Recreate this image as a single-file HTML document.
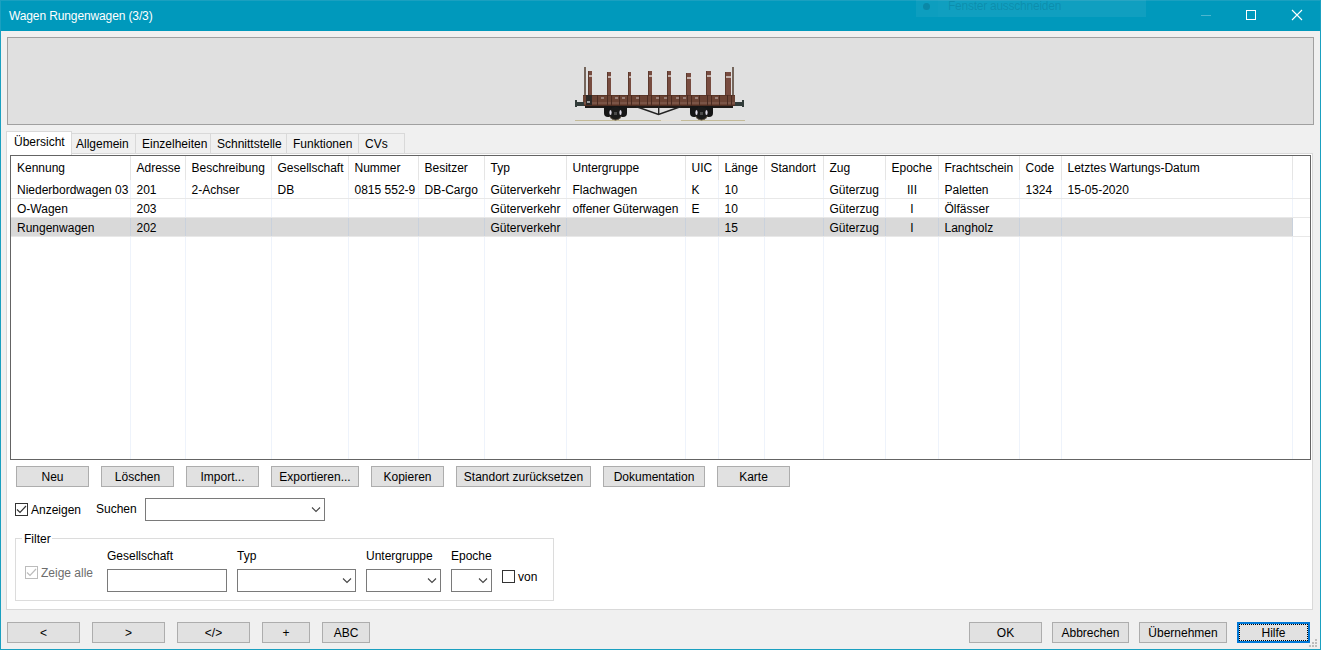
<!DOCTYPE html>
<html><head><meta charset="utf-8"><title>Wagen</title><style>
*{box-sizing:border-box;margin:0;padding:0}
html,body{width:1321px;height:650px;overflow:hidden;background:#f0f0f0}
body{position:relative;font-family:"Liberation Sans",sans-serif;font-size:12px;color:#000}
.a{position:absolute;white-space:pre}
.t{position:absolute;white-space:pre;line-height:14px}
.btn{position:absolute;border:1px solid #adadad;background:#e1e1e1}
.tab{position:absolute;top:133px;height:21px;border:1px solid #d9d9d9;border-bottom:none;background:#f0f0f0}
.cb{position:absolute;width:13px;height:13px;border:1px solid #333;background:#fff}
.inp{position:absolute;border:1px solid #7a7a7a;background:#fff}
</style></head><body>
<div class="a" style="left:0px;top:0px;width:1321px;height:31px;background:#0099bc"></div>
<div class="a" style="left:0px;top:0px;width:1321px;height:1px;background:#1aa0c0"></div>
<div class="a" style="left:0px;top:0px;width:1px;height:650px;background:#1aa0c0"></div>
<div class="a" style="left:1320px;top:0px;width:1px;height:650px;background:#1aa0c0"></div>
<div class="a" style="left:0px;top:649px;width:1321px;height:1px;background:#1aa0c0"></div>
<div class="t" style="left:9px;top:9px;color:#fff;letter-spacing:-0.12px">Wagen Rungenwagen (3/3)</div>
<div class="a" style="left:916px;top:0px;width:230px;height:17px;background:rgba(255,255,255,0.05)"></div>
<div class="a" style="left:938px;top:0px;width:208px;height:17px;background:rgba(255,255,255,0.015)"></div>
<div class="a" style="left:923px;top:3px;width:7px;height:7px;background:rgba(0,60,80,0.22);border-radius:50%"></div>
<div class="t" style="left:948px;top:-1px;color:rgba(0,80,105,0.22);letter-spacing:-0.25px">Fenster ausschneiden</div>
<div class="a" style="left:1201px;top:15px;width:10px;height:1px;background:#4cb6cf"></div>
<div class="a" style="left:1246px;top:10px;width:10px;height:10px;border:1px solid #fff"></div>
<svg class="a" style="left:1291px;top:9px" width="12" height="12" viewBox="0 0 12 12"><path d="M1 1L11 11M11 1L1 11" stroke="#fff" stroke-width="1.1"/></svg>
<div class="a" style="left:7px;top:37px;width:1307px;height:88px;background:#e0e0e0;border:1px solid #a0a0a0"></div>
<svg class="a" style="left:570px;top:60px" width="180" height="64" viewBox="570 60 180 64">
<rect x="575" y="120" width="170" height="1" fill="#c4bb98"/>
<rect x="661" y="120" width="20" height="1" fill="#e6e0d4"/>
<rect x="584" y="67" width="2" height="28" fill="#75665c"/>
<rect x="732" y="67" width="2" height="28" fill="#75665c"/>
<rect x="588" y="71" width="4" height="24" fill="#784c40"/>
<rect x="588" y="71" width="1" height="24" fill="#5c3a2e"/>
<rect x="589" y="75" width="3" height="2" fill="#c4b4ae"/>
<rect x="607" y="72" width="4" height="23" fill="#784c40"/>
<rect x="607" y="72" width="1" height="23" fill="#5c3a2e"/>
<rect x="608" y="76" width="3" height="2" fill="#c4b4ae"/>
<rect x="628" y="72" width="3" height="23" fill="#784c40"/>
<rect x="628" y="72" width="1" height="23" fill="#5c3a2e"/>
<rect x="629" y="76" width="2" height="2" fill="#c4b4ae"/>
<rect x="648" y="71" width="4" height="24" fill="#784c40"/>
<rect x="648" y="71" width="1" height="24" fill="#5c3a2e"/>
<rect x="649" y="75" width="3" height="2" fill="#c4b4ae"/>
<rect x="667" y="71" width="4" height="24" fill="#784c40"/>
<rect x="667" y="71" width="1" height="24" fill="#5c3a2e"/>
<rect x="668" y="75" width="3" height="2" fill="#c4b4ae"/>
<rect x="686" y="73" width="5" height="22" fill="#784c40"/>
<rect x="686" y="73" width="1" height="22" fill="#5c3a2e"/>
<rect x="687" y="77" width="4" height="2" fill="#c4b4ae"/>
<rect x="706" y="71" width="5" height="24" fill="#784c40"/>
<rect x="706" y="71" width="1" height="24" fill="#5c3a2e"/>
<rect x="707" y="75" width="4" height="2" fill="#c4b4ae"/>
<rect x="725" y="72" width="6" height="23" fill="#784c40"/>
<rect x="725" y="72" width="1" height="23" fill="#5c3a2e"/>
<rect x="726" y="76" width="5" height="2" fill="#c4b4ae"/>
<rect x="583" y="95" width="152" height="11" fill="#6b4334"/>
<rect x="583" y="95" width="152" height="1" fill="#5a3628"/>
<rect x="583" y="102" width="152" height="2" fill="#7a5446"/>
<rect x="583" y="105" width="152" height="1" fill="#4e2e22"/>
<rect x="597" y="95" width="1" height="11" fill="#4a2c22"/>
<rect x="607" y="95" width="1" height="11" fill="#4a2c22"/>
<rect x="611" y="95" width="1" height="11" fill="#4a2c22"/>
<rect x="619" y="95" width="1" height="11" fill="#4a2c22"/>
<rect x="627" y="95" width="1" height="11" fill="#4a2c22"/>
<rect x="631" y="95" width="1" height="11" fill="#4a2c22"/>
<rect x="639" y="95" width="1" height="11" fill="#4a2c22"/>
<rect x="647" y="95" width="1" height="11" fill="#4a2c22"/>
<rect x="651" y="95" width="1" height="11" fill="#4a2c22"/>
<rect x="659" y="95" width="1" height="11" fill="#4a2c22"/>
<rect x="667" y="95" width="1" height="11" fill="#4a2c22"/>
<rect x="671" y="95" width="1" height="11" fill="#4a2c22"/>
<rect x="679" y="95" width="1" height="11" fill="#4a2c22"/>
<rect x="687" y="95" width="1" height="11" fill="#4a2c22"/>
<rect x="691" y="95" width="1" height="11" fill="#4a2c22"/>
<rect x="699" y="95" width="1" height="11" fill="#4a2c22"/>
<rect x="707" y="95" width="1" height="11" fill="#4a2c22"/>
<rect x="711" y="95" width="1" height="11" fill="#4a2c22"/>
<rect x="719" y="95" width="1" height="11" fill="#4a2c22"/>
<rect x="727" y="95" width="1" height="11" fill="#4a2c22"/>
<rect x="731" y="95" width="1" height="11" fill="#4a2c22"/>
<rect x="601" y="97" width="3" height="2" fill="#9a8078"/>
<rect x="615" y="97" width="3" height="2" fill="#9a8078"/>
<rect x="622" y="97" width="3" height="2" fill="#9a8078"/>
<rect x="636" y="97" width="3" height="2" fill="#9a8078"/>
<rect x="656" y="97" width="3" height="2" fill="#9a8078"/>
<rect x="664" y="97" width="3" height="2" fill="#9a8078"/>
<rect x="676" y="97" width="3" height="2" fill="#9a8078"/>
<rect x="683" y="97" width="3" height="2" fill="#9a8078"/>
<rect x="695" y="97" width="3" height="2" fill="#9a8078"/>
<rect x="715" y="97" width="3" height="2" fill="#9a8078"/>
<rect x="586" y="95" width="6" height="10" fill="#2c2826"/>
<rect x="587" y="101" width="3" height="2" fill="#9a9a9a"/>
<rect x="585" y="106" width="148" height="2" fill="#1e1a18"/>
<rect x="576" y="102" width="8" height="4" fill="#323c3a"/>
<rect x="575" y="100" width="2" height="7" fill="#323c3a"/>
<rect x="735" y="102" width="8" height="4" fill="#323c3a"/>
<rect x="742" y="100" width="2" height="7" fill="#323c3a"/>
<path d="M604 106 H627 V113 Q627 117 623 117 H608 Q604 117 604 113 Z" fill="#161616"/>
<circle cx="615.5" cy="113.5" r="6.8" fill="#1a1a1a"/>
<path d="M609.5 116 A6.5 6.5 0 0 0 621.5 116" stroke="#7a6c58" stroke-width="0.8" fill="none"/>
<ellipse cx="610.5" cy="112.5" rx="1.1" ry="2.6" fill="#e4e0ec"/>
<ellipse cx="620.5" cy="112.5" rx="1.1" ry="2.6" fill="#dcd8e4"/>
<rect x="614.0" y="112" width="3" height="3" fill="#4a4a4a"/>
<path d="M690 106 H713 V113 Q713 117 709 117 H694 Q690 117 690 113 Z" fill="#161616"/>
<circle cx="701.5" cy="113.5" r="6.8" fill="#1a1a1a"/>
<path d="M695.5 116 A6.5 6.5 0 0 0 707.5 116" stroke="#7a6c58" stroke-width="0.8" fill="none"/>
<ellipse cx="696.5" cy="112.5" rx="1.1" ry="2.6" fill="#e4e0ec"/>
<ellipse cx="706.5" cy="112.5" rx="1.1" ry="2.6" fill="#dcd8e4"/>
<rect x="700.0" y="112" width="3" height="3" fill="#4a4a4a"/>
<path d="M636 106.5 L658.5 114.5 L681 106.5" stroke="#222" stroke-width="1.6" fill="none"/>
<rect x="658" y="106" width="1.4" height="8" fill="#222"/>
</svg>
<div class="tab" style="left:71px;width:65px"></div>
<div class="tab" style="left:135px;width:76px"></div>
<div class="tab" style="left:210px;width:77px"></div>
<div class="tab" style="left:286px;width:73px"></div>
<div class="tab" style="left:358px;width:47px"></div>
<div class="a" style="left:6px;top:153px;width:1307px;height:457px;background:#fff;border:1px solid #d9d9d9"></div>
<div class="a" style="left:6px;top:131px;width:66px;height:24px;background:#fff;border:1px solid #d9d9d9;border-bottom:none"></div>
<div class="t" style="left:14px;top:135px">Übersicht</div>
<div class="t" style="left:76px;top:137px">Allgemein</div>
<div class="t" style="left:142px;top:137px">Einzelheiten</div>
<div class="t" style="left:217px;top:137px">Schnittstelle</div>
<div class="t" style="left:293px;top:137px">Funktionen</div>
<div class="t" style="left:365px;top:137px">CVs</div>
<div class="a" style="left:10px;top:155px;width:1301px;height:305px;background:#fff;border:1px solid #646464"></div>
<div class="a" style="left:11px;top:218px;width:1282px;height:18px;background:#d9d9d9"></div>
<div class="a" style="left:130px;top:156px;width:1px;height:24px;background:#e5e5e5"></div>
<div class="a" style="left:130px;top:180px;width:1px;height:279px;background:#eef3fb"></div>
<div class="a" style="left:130px;top:218px;width:1px;height:18px;background:#c9d1dc"></div>
<div class="a" style="left:185px;top:156px;width:1px;height:24px;background:#e5e5e5"></div>
<div class="a" style="left:185px;top:180px;width:1px;height:279px;background:#eef3fb"></div>
<div class="a" style="left:185px;top:218px;width:1px;height:18px;background:#c9d1dc"></div>
<div class="a" style="left:271px;top:156px;width:1px;height:24px;background:#e5e5e5"></div>
<div class="a" style="left:271px;top:180px;width:1px;height:279px;background:#eef3fb"></div>
<div class="a" style="left:271px;top:218px;width:1px;height:18px;background:#c9d1dc"></div>
<div class="a" style="left:348px;top:156px;width:1px;height:24px;background:#e5e5e5"></div>
<div class="a" style="left:348px;top:180px;width:1px;height:279px;background:#eef3fb"></div>
<div class="a" style="left:348px;top:218px;width:1px;height:18px;background:#c9d1dc"></div>
<div class="a" style="left:418px;top:156px;width:1px;height:24px;background:#e5e5e5"></div>
<div class="a" style="left:418px;top:180px;width:1px;height:279px;background:#eef3fb"></div>
<div class="a" style="left:418px;top:218px;width:1px;height:18px;background:#c9d1dc"></div>
<div class="a" style="left:484px;top:156px;width:1px;height:24px;background:#e5e5e5"></div>
<div class="a" style="left:484px;top:180px;width:1px;height:279px;background:#eef3fb"></div>
<div class="a" style="left:484px;top:218px;width:1px;height:18px;background:#c9d1dc"></div>
<div class="a" style="left:566px;top:156px;width:1px;height:24px;background:#e5e5e5"></div>
<div class="a" style="left:566px;top:180px;width:1px;height:279px;background:#eef3fb"></div>
<div class="a" style="left:566px;top:218px;width:1px;height:18px;background:#c9d1dc"></div>
<div class="a" style="left:685px;top:156px;width:1px;height:24px;background:#e5e5e5"></div>
<div class="a" style="left:685px;top:180px;width:1px;height:279px;background:#eef3fb"></div>
<div class="a" style="left:685px;top:218px;width:1px;height:18px;background:#c9d1dc"></div>
<div class="a" style="left:718px;top:156px;width:1px;height:24px;background:#e5e5e5"></div>
<div class="a" style="left:718px;top:180px;width:1px;height:279px;background:#eef3fb"></div>
<div class="a" style="left:718px;top:218px;width:1px;height:18px;background:#c9d1dc"></div>
<div class="a" style="left:764px;top:156px;width:1px;height:24px;background:#e5e5e5"></div>
<div class="a" style="left:764px;top:180px;width:1px;height:279px;background:#eef3fb"></div>
<div class="a" style="left:764px;top:218px;width:1px;height:18px;background:#c9d1dc"></div>
<div class="a" style="left:823px;top:156px;width:1px;height:24px;background:#e5e5e5"></div>
<div class="a" style="left:823px;top:180px;width:1px;height:279px;background:#eef3fb"></div>
<div class="a" style="left:823px;top:218px;width:1px;height:18px;background:#c9d1dc"></div>
<div class="a" style="left:885px;top:156px;width:1px;height:24px;background:#e5e5e5"></div>
<div class="a" style="left:885px;top:180px;width:1px;height:279px;background:#eef3fb"></div>
<div class="a" style="left:885px;top:218px;width:1px;height:18px;background:#c9d1dc"></div>
<div class="a" style="left:938px;top:156px;width:1px;height:24px;background:#e5e5e5"></div>
<div class="a" style="left:938px;top:180px;width:1px;height:279px;background:#eef3fb"></div>
<div class="a" style="left:938px;top:218px;width:1px;height:18px;background:#c9d1dc"></div>
<div class="a" style="left:1019px;top:156px;width:1px;height:24px;background:#e5e5e5"></div>
<div class="a" style="left:1019px;top:180px;width:1px;height:279px;background:#eef3fb"></div>
<div class="a" style="left:1019px;top:218px;width:1px;height:18px;background:#c9d1dc"></div>
<div class="a" style="left:1061px;top:156px;width:1px;height:24px;background:#e5e5e5"></div>
<div class="a" style="left:1061px;top:180px;width:1px;height:279px;background:#eef3fb"></div>
<div class="a" style="left:1061px;top:218px;width:1px;height:18px;background:#c9d1dc"></div>
<div class="a" style="left:1292px;top:156px;width:1px;height:24px;background:#e5e5e5"></div>
<div class="a" style="left:1292px;top:180px;width:1px;height:279px;background:#eef3fb"></div>
<div class="a" style="left:1292px;top:218px;width:1px;height:18px;background:#c9d1dc"></div>
<div class="a" style="left:11px;top:198px;width:1299px;height:1px;background:#e8e8e8"></div>
<div class="a" style="left:11px;top:217px;width:1299px;height:1px;background:#e8e8e8"></div>
<div class="a" style="left:11px;top:236px;width:1299px;height:1px;background:#e8e8e8"></div>
<div class="t" style="left:17px;top:161px">Kennung</div>
<div class="t" style="left:136.5px;top:161px">Adresse</div>
<div class="t" style="left:191.5px;top:161px">Beschreibung</div>
<div class="t" style="left:277.5px;top:161px">Gesellschaft</div>
<div class="t" style="left:354.5px;top:161px">Nummer</div>
<div class="t" style="left:424.5px;top:161px">Besitzer</div>
<div class="t" style="left:490.5px;top:161px">Typ</div>
<div class="t" style="left:572.5px;top:161px">Untergruppe</div>
<div class="t" style="left:691.5px;top:161px">UIC</div>
<div class="t" style="left:724.5px;top:161px">Länge</div>
<div class="t" style="left:770.5px;top:161px">Standort</div>
<div class="t" style="left:829.5px;top:161px">Zug</div>
<div class="t" style="left:891.5px;top:161px">Epoche</div>
<div class="t" style="left:944.5px;top:161px">Frachtschein</div>
<div class="t" style="left:1025.5px;top:161px">Code</div>
<div class="t" style="left:1067.5px;top:161px">Letztes Wartungs-Datum</div>
<div class="t" style="left:17px;top:183px">Niederbordwagen 03</div>
<div class="t" style="left:136.5px;top:183px">201</div>
<div class="t" style="left:191.5px;top:183px">2-Achser</div>
<div class="t" style="left:277.5px;top:183px">DB</div>
<div class="t" style="left:354.5px;top:183px">0815 552-9</div>
<div class="t" style="left:424.5px;top:183px">DB-Cargo</div>
<div class="t" style="left:490.5px;top:183px">Güterverkehr</div>
<div class="t" style="left:572.5px;top:183px">Flachwagen</div>
<div class="t" style="left:691.5px;top:183px">K</div>
<div class="t" style="left:724.5px;top:183px">10</div>
<div class="t" style="left:829.5px;top:183px">Güterzug</div>
<div class="t" style="left:886px;width:52px;top:183px;text-align:center">III</div>
<div class="t" style="left:944.5px;top:183px">Paletten</div>
<div class="t" style="left:1025.5px;top:183px">1324</div>
<div class="t" style="left:1067.5px;top:183px">15-05-2020</div>
<div class="t" style="left:17px;top:202px">O-Wagen</div>
<div class="t" style="left:136.5px;top:202px">203</div>
<div class="t" style="left:490.5px;top:202px">Güterverkehr</div>
<div class="t" style="left:572.5px;top:202px">offener Güterwagen</div>
<div class="t" style="left:691.5px;top:202px">E</div>
<div class="t" style="left:724.5px;top:202px">10</div>
<div class="t" style="left:829.5px;top:202px">Güterzug</div>
<div class="t" style="left:886px;width:52px;top:202px;text-align:center">I</div>
<div class="t" style="left:944.5px;top:202px">Ölfässer</div>
<div class="t" style="left:17px;top:221px">Rungenwagen</div>
<div class="t" style="left:136.5px;top:221px">202</div>
<div class="t" style="left:490.5px;top:221px">Güterverkehr</div>
<div class="t" style="left:724.5px;top:221px">15</div>
<div class="t" style="left:829.5px;top:221px">Güterzug</div>
<div class="t" style="left:886px;width:52px;top:221px;text-align:center">I</div>
<div class="t" style="left:944.5px;top:221px">Langholz</div>
<div class="btn" style="left:16px;top:466px;width:73px;height:21px"></div>
<div class="t" style="left:16px;top:470px;width:73px;text-align:center">Neu</div>
<div class="btn" style="left:101px;top:466px;width:73px;height:21px"></div>
<div class="t" style="left:101px;top:470px;width:73px;text-align:center">Löschen</div>
<div class="btn" style="left:186px;top:466px;width:73px;height:21px"></div>
<div class="t" style="left:186px;top:470px;width:73px;text-align:center">Import...</div>
<div class="btn" style="left:271px;top:466px;width:88px;height:21px"></div>
<div class="t" style="left:271px;top:470px;width:88px;text-align:center">Exportieren...</div>
<div class="btn" style="left:371px;top:466px;width:73px;height:21px"></div>
<div class="t" style="left:371px;top:470px;width:73px;text-align:center">Kopieren</div>
<div class="btn" style="left:456px;top:466px;width:135px;height:21px"></div>
<div class="t" style="left:456px;top:470px;width:135px;text-align:center">Standort zurücksetzen</div>
<div class="btn" style="left:603px;top:466px;width:102px;height:21px"></div>
<div class="t" style="left:603px;top:470px;width:102px;text-align:center">Dokumentation</div>
<div class="btn" style="left:717px;top:466px;width:73px;height:21px"></div>
<div class="t" style="left:717px;top:470px;width:73px;text-align:center">Karte</div>
<div class="a" style="left:15px;top:503px;width:13px;height:13px;border:1px solid #333;background:#fff"></div>
<svg class="a" style="left:15px;top:503px" width="13" height="13" viewBox="0 0 13 13"><path d="M2 6.5L5 9.5L11 3" stroke="#333" stroke-width="1.2" fill="none"/></svg>
<div class="t" style="left:31px;top:503px">Anzeigen</div>
<div class="t" style="left:96px;top:502px">Suchen</div>
<div class="inp" style="left:145px;top:498px;width:180px;height:23px"></div>
<svg class="a" style="left:311px;top:506px" width="10" height="7" viewBox="0 0 10 7"><path d="M1 1.5L5 5.5L9 1.5" stroke="#444" stroke-width="1.1" fill="none"/></svg>
<div class="a" style="left:15px;top:538px;width:539px;height:63px;border:1px solid #dcdcdc"></div>
<div class="a" style="left:22px;top:536px;width:30px;height:4px;background:#fff"></div>
<div class="t" style="left:24px;top:532px">Filter</div>
<div class="a" style="left:25px;top:566px;width:13px;height:13px;border:1px solid #bcbcbc;background:#fff"></div>
<svg class="a" style="left:25px;top:566px" width="13" height="13" viewBox="0 0 13 13"><path d="M2 6.5L5 9.5L11 3" stroke="#bcbcbc" stroke-width="1.2" fill="none"/></svg>
<div class="t" style="left:41px;top:566px;color:#6d6d6d">Zeige alle</div>
<div class="t" style="left:107px;top:549px">Gesellschaft</div>
<div class="inp" style="left:107px;top:569px;width:120px;height:23px"></div>
<div class="t" style="left:237px;top:549px">Typ</div>
<div class="inp" style="left:237px;top:569px;width:119px;height:23px"></div>
<svg class="a" style="left:342px;top:577px" width="10" height="7" viewBox="0 0 10 7"><path d="M1 1.5L5 5.5L9 1.5" stroke="#444" stroke-width="1.1" fill="none"/></svg>
<div class="t" style="left:366px;top:549px">Untergruppe</div>
<div class="inp" style="left:366px;top:569px;width:75px;height:23px"></div>
<svg class="a" style="left:427px;top:577px" width="10" height="7" viewBox="0 0 10 7"><path d="M1 1.5L5 5.5L9 1.5" stroke="#444" stroke-width="1.1" fill="none"/></svg>
<div class="t" style="left:451px;top:549px">Epoche</div>
<div class="inp" style="left:451px;top:569px;width:41px;height:23px"></div>
<svg class="a" style="left:478px;top:577px" width="10" height="7" viewBox="0 0 10 7"><path d="M1 1.5L5 5.5L9 1.5" stroke="#444" stroke-width="1.1" fill="none"/></svg>
<div class="a" style="left:502px;top:570px;width:13px;height:13px;border:1px solid #333;background:#fff"></div>
<div class="t" style="left:518px;top:570px">von</div>
<div class="btn" style="left:7px;top:622px;width:73px;height:21px"></div>
<div class="t" style="left:7px;top:626px;width:73px;text-align:center">&lt;</div>
<div class="btn" style="left:92px;top:622px;width:73px;height:21px"></div>
<div class="t" style="left:92px;top:626px;width:73px;text-align:center">&gt;</div>
<div class="btn" style="left:177px;top:622px;width:73px;height:21px"></div>
<div class="t" style="left:177px;top:626px;width:73px;text-align:center">&lt;/&gt;</div>
<div class="btn" style="left:262px;top:622px;width:48px;height:21px"></div>
<div class="t" style="left:262px;top:626px;width:48px;text-align:center">+</div>
<div class="btn" style="left:322px;top:622px;width:48px;height:21px"></div>
<div class="t" style="left:322px;top:626px;width:48px;text-align:center">ABC</div>
<div class="btn" style="left:969px;top:622px;width:73px;height:21px"></div>
<div class="t" style="left:969px;top:626px;width:73px;text-align:center">OK</div>
<div class="btn" style="left:1052px;top:622px;width:77px;height:21px"></div>
<div class="t" style="left:1052px;top:626px;width:77px;text-align:center">Abbrechen</div>
<div class="btn" style="left:1139px;top:622px;width:88px;height:21px"></div>
<div class="t" style="left:1139px;top:626px;width:88px;text-align:center">Übernehmen</div>
<div class="a" style="left:1237px;top:622px;width:73px;height:21px;border:2px solid #0078d7;background:#e1e1e1"></div>
<div class="a" style="left:1239px;top:624px;width:69px;height:17px;border:1px dotted #000"></div>
<div class="t" style="left:1237px;top:626px;width:73px;text-align:center">Hilfe</div>
<div class="a" style="left:1315px;top:639px;width:2px;height:2px;background:#bdbdbd"></div>
<div class="a" style="left:1312px;top:642px;width:2px;height:2px;background:#bdbdbd"></div>
<div class="a" style="left:1315px;top:642px;width:2px;height:2px;background:#bdbdbd"></div>
<div class="a" style="left:1309px;top:645px;width:2px;height:2px;background:#bdbdbd"></div>
<div class="a" style="left:1312px;top:645px;width:2px;height:2px;background:#bdbdbd"></div>
<div class="a" style="left:1315px;top:645px;width:2px;height:2px;background:#bdbdbd"></div>
</body></html>
